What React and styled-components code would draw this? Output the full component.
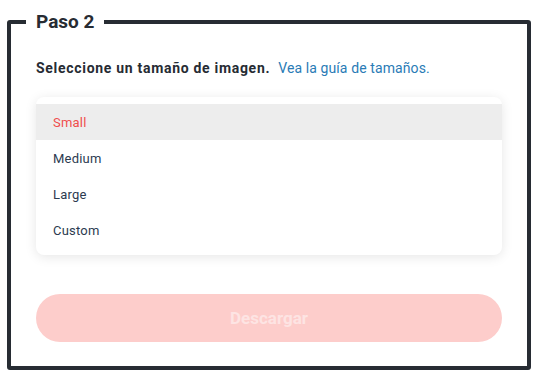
import styled, { createGlobalStyle } from 'styled-components'

const GlobalStyle = createGlobalStyle`
body {
    margin: 0;
    background: #ffffff;
    font-family: Roboto, "Liberation Sans", sans-serif;
}
`

const Page = styled.div`
padding: 11px 13px 14px 7px;
`

const Step = styled.fieldset`
margin: 0;
border: 4px solid #272c33;
border-radius: 3px;
padding: 0 15px 24px;
`

const StepTitle = styled.legend`
padding: 0 10px;
font-size: 19px;
font-weight: 700;
color: #272c33;
line-height: 22px;
`

const StepBody = styled.div`
padding: 0 10px;
display: flex;
flex-direction: column;
`

const Prompt = styled.p`
margin: 25px 0 0;
font-size: 14px;
line-height: 20px;
font-weight: 700;
letter-spacing: 0.7px;
color: #262b33;
`

const GuideLink = styled.a`
margin-left: 8px;
font-weight: 400;
letter-spacing: 0.1px;
color: #2a7bb6;
text-decoration: none;
`

const Menu = styled.ul`
list-style: none;
margin: 19px 0 0;
padding: 7px 0;
background: #ffffff;
border-radius: 8px;
box-shadow: 0 2px 12px rgba(0, 0, 0, 0.1);
`

const MenuItem = styled.li`
height: 36px;
display: flex;
align-items: center;
padding: 0 17px;
font-size: 13px;
letter-spacing: 0.2px;
color: ${p => (p.$active ? '#f04e4c' : '#2c3b50')};
background: ${p => (p.$active ? '#ededed' : 'transparent')};
`

const DownloadButton = styled.button`
margin-top: 39px;
height: 48px;
border: none;
border-radius: 24px;
background: #fdcdcb;
color: #fde4e3;
font-family: inherit;
font-size: 17px;
font-weight: 700;
`

const sizes = ['Small', 'Medium', 'Large', 'Custom']

function App() {
    return (
        <>
            <GlobalStyle />
            <Page>
                <Step>
                    <StepTitle>Paso 2</StepTitle>
                    <StepBody>
                        <Prompt>
                            Seleccione un tamaño de imagen.
                            <GuideLink href="#">Vea la guía de tamaños.</GuideLink>
                        </Prompt>
                        <Menu>
                            {sizes.map((size, i) => (
                                <MenuItem key={size} $active={i === 0}>{size}</MenuItem>
                            ))}
                        </Menu>
                        <DownloadButton disabled>Descargar</DownloadButton>
                    </StepBody>
                </Step>
            </Page>
        </>
    )
}

export default App
